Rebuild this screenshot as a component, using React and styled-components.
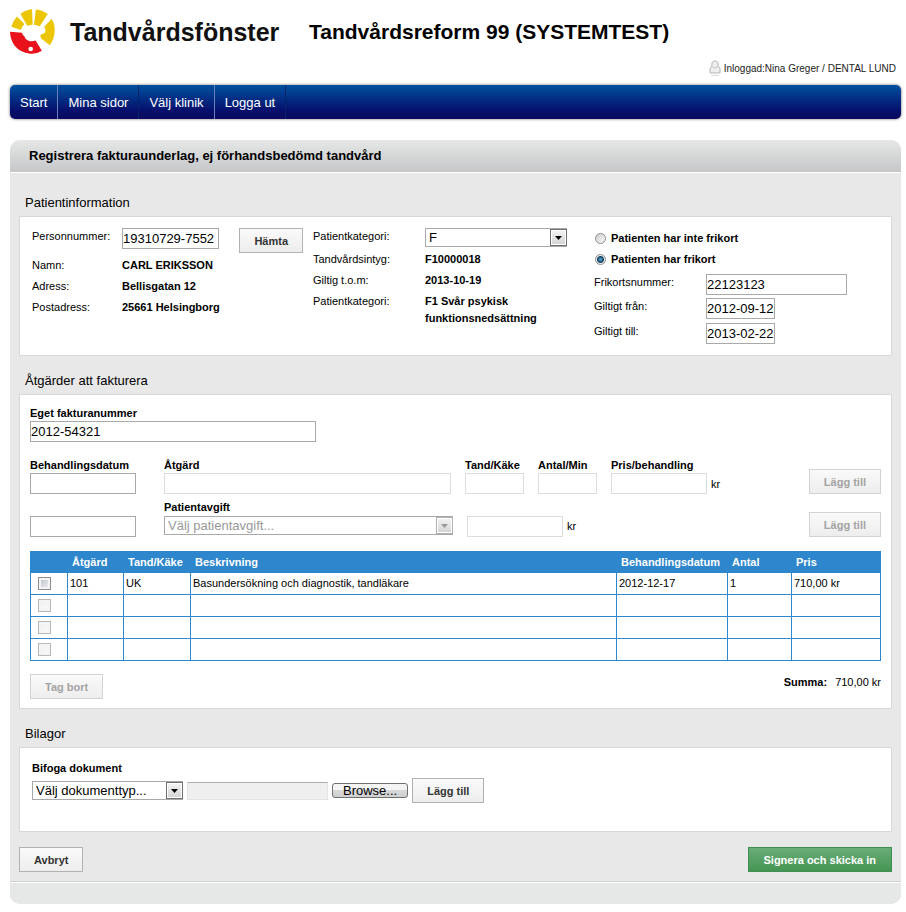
import React, { useRef, useState } from 'react';
import styled, { createGlobalStyle, css } from 'styled-components';

const GlobalStyle = createGlobalStyle`
  * {
    box-sizing: border-box;
  }

  body {
    margin: 0;
    background: #fff;
    color: #000;
    font-family: 'Liberation Sans', Arial, sans-serif;
    font-size: 11px;
    line-height: 17px;
  }

  input, select, button {
    margin: 0;
    font-family: inherit;
  }
`;

const Page = styled.div`
  padding: 0 5px 8px 10px;
`;

/* ---------- header ---------- */

const Header = styled.header`
  display: flex;
  align-items: center;
  height: 60px;
  padding-top: 3px;
`;

const Brand = styled.span`
  width: 239px;
  margin-left: 15px;
  font-size: 25px;
  line-height: 32px;
  font-weight: bold;
  color: #111;
`;

const SystemName = styled.h1`
  margin: 0;
  font-size: 21px;
  line-height: 32px;
  font-weight: bold;
`;

const UserInfo = styled.div`
  display: flex;
  justify-content: flex-end;
  align-items: center;
  gap: 3px;
  height: 17px;
  margin-bottom: 8px;
  padding-right: 5px;
  font-size: 10px;
  color: #222;
`;

const Nav = styled.nav`
  display: flex;
  height: 34px;
  border-radius: 5px;
  background: linear-gradient(#00509f, #06106c 75%, #0a0a5c);
  box-shadow: 0 0 3px rgba(0, 0, 0, 0.6);
`;

const NavLink = styled.a`
  padding: 0 10px;
  border-right: 1px solid ${(props) => (props.$strong ? '#6a7fb5' : '#06246b')};
  font-size: 13px;
  line-height: 35px;
  color: #fff;
  text-decoration: none;
`;

/* ---------- panel ---------- */

const Panel = styled.main`
  margin-top: 21px;
  border-radius: 10px;
  overflow: hidden;
  background: #e8e8e8;
`;

const PanelTitle = styled.h2`
  margin: 0;
  padding: 0 19px;
  border-bottom: 1px solid #fff;
  background: linear-gradient(#e6e8e7, #c5c6c8);
  font-size: 13px;
  line-height: 32px;
  font-weight: bold;
`;

const PanelBody = styled.div`
  padding: 20px 9px 9px;
`;

const PanelFooter = styled.footer`
  height: 23px;
  border-top: 1px solid #d0d0d0;
  background: #e5e8e7;
  box-shadow: inset 0 1px 0 #fff;
`;

const SectionTitle = styled.h3`
  margin: 0 0 3px;
  padding-left: 6px;
  font-size: 13px;
  line-height: 20px;
  font-weight: normal;
`;

const Box = styled.section`
  margin-bottom: 15px;
  border: 1px solid #d8d8d8;
  background: #fff;
`;

const PatientBox = styled(Box)`
  display: grid;
  grid-template-columns: repeat(3, 1fr);
  min-height: 140px;
  padding: 11px 16px 11px 12px;
`;

const TreatmentBox = styled(Box)`
  padding: 10px 10px 9px;
`;

const AttachmentBox = styled(Box)`
  min-height: 85px;
  padding: 12px;
`;

/* ---------- controls ---------- */

const TextInput = styled.input`
  width: ${(props) => props.$width};
  height: 21px;
  padding: 0;
  border: 1px solid #a9a9a9;
  border-radius: 0;
  background: #fff;
  color: #000;
  font-size: 13px;

  &:disabled {
    border-color: #ddd;
  }
`;

const buttonColors = {
  normal: css`
    border-color: #b2b2b2;
    background: linear-gradient(#fafafa, #ededed);
    color: #333;
  `,
  green: css`
    padding: 0 15px;
    border-color: #3f8f55;
    background: linear-gradient(#69ad78, #459453);
    color: #fff;
  `,
};

const Button = styled.button`
  height: 25px;
  padding: 0 14px;
  border: 1px solid;
  font-size: 11px;
  font-weight: bold;
  white-space: nowrap;
  ${(props) => buttonColors[props.$color || 'normal']}

  &:disabled {
    border-color: #d3d3d3;
    color: #a3a3a3;
  }
`;

const BrowseButton = styled.button`
  height: 15px;
  padding: 0 10px;
  border: 1px solid #707070;
  border-radius: 3px;
  background: linear-gradient(#f4f4f4 45%, #d8d8d8 50%, #d0d0d0);
  font-size: 13px;
  line-height: 13px;
`;

const FileName = styled.input`
  width: 141px;
  height: 18px;
  border: 1px solid #e3e3e3;
  border-top-color: #ababab;
  background: #efefef;
  font-size: 11px;
`;

const SelectWrap = styled.span`
  display: inline-block;
  position: relative;
  width: ${(props) => props.$width};
  height: 19px;
`;

const NativeSelect = styled.select`
  appearance: none;
  display: block;
  width: 100%;
  height: 100%;
  padding: 0 18px 0 3px;
  border: 1px solid #a9a9a9;
  border-radius: 0;
  background: #fff;
  color: #000;
  font-size: 13px;

  &:disabled {
    opacity: 1;
    color: #999;
  }
`;

const Arrow = styled.span`
  position: absolute;
  top: 1px;
  right: 0;
  bottom: 1px;
  display: flex;
  align-items: center;
  justify-content: center;
  width: 17px;
  border: 1px solid ${(props) => (props.$disabled ? '#b0b0b0' : '#6f6f6f')};
  background: linear-gradient(#f4f4f4, #d3d3d3);
  box-shadow: inset 0 0 0 1px #fff;
  color: ${(props) => (props.$disabled ? '#999' : '#000')};
  pointer-events: none;
`;

const Radio = styled.input`
  appearance: none;
  width: 11px;
  height: 11px;
  border: 1px solid #8e8f8f;
  border-radius: 50%;
  background: linear-gradient(135deg, #cfcfcf, #f8f8f8);

  &:checked {
    background: radial-gradient(circle, #56b0dc 0, #16405f 3px, #eee 4px);
  }
`;

const Checkbox = styled.input`
  appearance: none;
  display: block;
  width: 13px;
  height: 13px;
  margin-left: 7px;
  border: 1px solid #8e8f8f;
  background: linear-gradient(135deg, #b4bac6, #f6f6f6);
  box-shadow: inset 0 0 0 2px #f4f4f4;

  &:checked {
    background: #2f5f8f;
  }

  &:disabled {
    border-color: #b8b8b8;
    background: linear-gradient(135deg, #eee, #fafafa);
  }
`;

/* ---------- patient information ---------- */

const InfoRow = styled.div`
  display: grid;
  grid-template-columns: ${(props) => props.$label || '112px'} 1fr;
  align-items: start;
  min-height: ${(props) => props.$height || '21px'};
`;

const InfoLabel = styled.label`
  line-height: 17px;
`;

const InfoValue = styled.strong`
  padding: 2px 0;
`;

const InfoTerm = styled.span`
  padding: 2px 0;
`;

const WithButton = styled.div`
  display: flex;
  justify-content: space-between;
  padding-right: 10px;
`;

const RadioRow = styled.label`
  display: flex;
  align-items: center;
  gap: 5px;
  height: 21px;
  padding-left: 1px;
  font-weight: bold;
`;

const CardFields = styled.div`
  padding-top: 4px;
`;

/* ---------- treatments ---------- */

const Field = styled.div`
  display: flex;
  flex-direction: column;
  align-items: flex-start;
  line-height: 16px;
  font-weight: bold;

  & > ${SelectWrap} {
    margin: 1px 0 2px;
  }
`;

const EntryRow = styled.div`
  display: flex;
  align-items: flex-end;
  gap: 14px;
  margin-top: ${(props) => props.$top};

  & > :first-child {
    margin-right: 14px;
  }

  & > :last-child {
    margin-left: auto;
  }
`;

const Price = styled.div`
  display: flex;
  align-items: center;
  gap: 4px;
  font-weight: normal;
`;

const Table = styled.table`
  width: 100%;
  margin-top: 14px;
  border-collapse: collapse;
  table-layout: fixed;
`;

const HeadCell = styled.th`
  width: ${(props) => props.$width || 'auto'};
  height: 21px;
  padding: 0 0 0 4px;
  border: 1px solid #2e86cc;
  background: #2e86cc;
  color: #fff;
  text-align: left;
  white-space: nowrap;
`;

const Cell = styled.td`
  height: 22px;
  padding: 0 0 0 2px;
  border: 1px solid #2e86cc;

  &:first-child {
    padding-left: 0;
  }
`;

const TableFooter = styled.div`
  display: flex;
  justify-content: space-between;
  margin-top: 13px;
`;

const Sum = styled.div`
  display: flex;
  gap: 8px;
`;

/* ---------- attachments and actions ---------- */

const AttachRow = styled.div`
  display: flex;
  align-items: center;
  gap: 4px;
  margin-top: 2px;
`;

const HiddenFile = styled.input`
  display: none;
`;

const Actions = styled.div`
  display: flex;
  justify-content: space-between;
`;

const Logo = () => (
  <svg width="45" height="45" viewBox="30 23 137 137" aria-hidden="true">
    <g fill="#ecc505">
      <path d="M34 77 Q39 59 51 46 L74 69 Q66 77 63 87 Z" />
      <path d="M62 38 Q77 26 97 24 L99 71 Q90 71 83 75 Z" />
      <path d="M109 24 Q128 26 145 38 L120 76 Q112 71 103 71 Z" />
      <path d="M157 53 Q167 70 166 91 Q165 115 151 133 L125 113 Q120 105 125 100 Q137 98 138 91 Q138 83 134 77 Z" />
    </g>
    <path
      fill="#e8111c"
      d="M30 92 L67 95 Q67 102 74 106 Q77 119 91 121 Q100 122 108 119 L127 150 Q111 161 91 159 Q62 157 45 136 Q31 117 30 92 Z"
    />
    <circle cx="93" cy="145" r="7" fill="#fff" />
  </svg>
);

const UserIcon = () => (
  <svg width="12" height="17" viewBox="0 0 12 17" aria-hidden="true">
    <path d="M1 13 V9 Q1 7 3 6.5 Q2 1 6 1 Q10 1 9 6.5 Q11 7 11 9 V13 Z" fill="#eee" stroke="#b5b5b5" />
    <path d="M3.5 7 Q6 9 8.5 7" fill="none" stroke="#c4c4c4" />
    <path d="M2 15.5 H10" stroke="#ddd" />
  </svg>
);

const Select = ({ width, disabled, children, ...rest }) => (
  <SelectWrap $width={width}>
    <NativeSelect disabled={disabled} {...rest}>
      {children}
    </NativeSelect>
    <Arrow $disabled={disabled}>
      <svg width="7" height="4" viewBox="0 0 7 4" aria-hidden="true">
        <path d="M0 0 H7 L3.5 4 Z" fill="currentColor" />
      </svg>
    </Arrow>
  </SelectWrap>
);

const rows = [
  { code: '101', tooth: 'UK', text: 'Basundersökning och diagnostik, tandläkare', date: '2012-12-17', count: '1', price: '710,00 kr' },
  {},
  {},
  {},
];

const PatientInformation = () => {
  const [hasCard, setHasCard] = useState(true);

  return (
    <PatientBox>
      <div>
        <InfoRow $label="90px" $height="27px">
          <InfoLabel htmlFor="personnummer">Personnummer:</InfoLabel>
          <WithButton>
            <TextInput id="personnummer" $width="97px" defaultValue="19310729-7552" />
            <Button type="button">Hämta</Button>
          </WithButton>
        </InfoRow>
        <InfoRow $label="90px">
          <InfoTerm>Namn:</InfoTerm>
          <InfoValue>CARL ERIKSSON</InfoValue>
        </InfoRow>
        <InfoRow $label="90px">
          <InfoTerm>Adress:</InfoTerm>
          <InfoValue>Bellisgatan 12</InfoValue>
        </InfoRow>
        <InfoRow $label="90px">
          <InfoTerm>Postadress:</InfoTerm>
          <InfoValue>25661 Helsingborg</InfoValue>
        </InfoRow>
      </div>

      <div>
        <InfoRow>
          <InfoLabel htmlFor="patientkategori">Patientkategori:</InfoLabel>
          <Select id="patientkategori" width="142px" defaultValue="F">
            <option>F</option>
          </Select>
        </InfoRow>
        <InfoRow>
          <InfoTerm>Tandvårdsintyg:</InfoTerm>
          <InfoValue>F10000018</InfoValue>
        </InfoRow>
        <InfoRow>
          <InfoTerm>Giltig t.o.m:</InfoTerm>
          <InfoValue>2013-10-19</InfoValue>
        </InfoRow>
        <InfoRow>
          <InfoTerm>Patientkategori:</InfoTerm>
          <InfoValue>F1 Svår psykisk funktionsnedsättning</InfoValue>
        </InfoRow>
      </div>

      <div>
        <RadioRow>
          <Radio type="radio" name="frikort" checked={!hasCard} onChange={() => setHasCard(false)} />
          Patienten har inte frikort
        </RadioRow>
        <RadioRow>
          <Radio type="radio" name="frikort" checked={hasCard} onChange={() => setHasCard(true)} />
          Patienten har frikort
        </RadioRow>
        <CardFields>
          <InfoRow $height="24px">
            <InfoLabel htmlFor="frikortsnummer">Frikortsnummer:</InfoLabel>
            <TextInput id="frikortsnummer" $width="141px" defaultValue="22123123" />
          </InfoRow>
          <InfoRow $height="25px">
            <InfoLabel htmlFor="giltigtFran">Giltigt från:</InfoLabel>
            <TextInput id="giltigtFran" $width="69px" defaultValue="2012-09-12" />
          </InfoRow>
          <InfoRow>
            <InfoLabel htmlFor="giltigtTill">Giltigt till:</InfoLabel>
            <TextInput id="giltigtTill" $width="69px" defaultValue="2013-02-22" />
          </InfoRow>
        </CardFields>
      </div>
    </PatientBox>
  );
};

const Treatments = () => (
  <TreatmentBox>
    <Field>
      <label htmlFor="fakturanummer">Eget fakturanummer</label>
      <TextInput id="fakturanummer" $width="286px" defaultValue="2012-54321" />
    </Field>

    <EntryRow $top="15px">
      <Field>
        <label htmlFor="behandlingsdatum">Behandlingsdatum</label>
        <TextInput id="behandlingsdatum" $width="106px" />
      </Field>
      <Field>
        <label htmlFor="atgard">Åtgärd</label>
        <TextInput id="atgard" $width="287px" disabled />
      </Field>
      <Field>
        <label htmlFor="tand">Tand/Käke</label>
        <TextInput id="tand" $width="59px" disabled />
      </Field>
      <Field>
        <label htmlFor="antal">Antal/Min</label>
        <TextInput id="antal" $width="59px" disabled />
      </Field>
      <Field>
        <label htmlFor="pris">Pris/behandling</label>
        <Price>
          <TextInput id="pris" $width="96px" disabled />
          kr
        </Price>
      </Field>
      <Button type="button" disabled>Lägg till</Button>
    </EntryRow>

    <EntryRow $top="5px">
      <TextInput $width="106px" aria-label="Datum" />
      <Field>
        <label htmlFor="patientavgift">Patientavgift</label>
        <Select id="patientavgift" width="289px" disabled>
          <option>Välj patientavgift...</option>
        </Select>
      </Field>
      <Price>
        <TextInput $width="96px" aria-label="Avgift" disabled />
        kr
      </Price>
      <Button type="button" disabled>Lägg till</Button>
    </EntryRow>

    <Table>
      <thead>
        <tr>
          <HeadCell $width="37px" aria-label="Välj" />
          <HeadCell $width="56px">Åtgärd</HeadCell>
          <HeadCell $width="67px">Tand/Käke</HeadCell>
          <HeadCell>Beskrivning</HeadCell>
          <HeadCell $width="111px">Behandlingsdatum</HeadCell>
          <HeadCell $width="64px">Antal</HeadCell>
          <HeadCell $width="89px">Pris</HeadCell>
        </tr>
      </thead>
      <tbody>
        {rows.map((row, i) => (
          <tr key={i}>
            <Cell>
              <Checkbox type="checkbox" disabled={!row.code} aria-label={`Rad ${i + 1}`} />
            </Cell>
            <Cell>{row.code}</Cell>
            <Cell>{row.tooth}</Cell>
            <Cell>{row.text}</Cell>
            <Cell>{row.date}</Cell>
            <Cell>{row.count}</Cell>
            <Cell>{row.price}</Cell>
          </tr>
        ))}
      </tbody>
    </Table>

    <TableFooter>
      <Button type="button" disabled>Tag bort</Button>
      <Sum>
        <strong>Summa:</strong>
        <span>710,00 kr</span>
      </Sum>
    </TableFooter>
  </TreatmentBox>
);

const Attachments = () => {
  const fileRef = useRef(null);
  const [fileName, setFileName] = useState('');

  const handleFile = (e) => {
    setFileName(e.target.files[0] ? e.target.files[0].name : '');
  };

  return (
    <AttachmentBox>
      <Field as="label" htmlFor="dokumenttyp">Bifoga dokument</Field>
      <AttachRow>
        <Select id="dokumenttyp" width="151px">
          <option>Välj dokumenttyp...</option>
        </Select>
        <FileName type="text" aria-label="Vald fil" value={fileName} readOnly />
        <HiddenFile type="file" ref={fileRef} onChange={handleFile} />
        <BrowseButton type="button" onClick={() => fileRef.current.click()}>Browse...</BrowseButton>
        <Button type="button">Lägg till</Button>
      </AttachRow>
    </AttachmentBox>
  );
};

const App = () => (
  <>
    <GlobalStyle />
    <Page>
      <Header>
        <Logo />
        <Brand>Tandvårdsfönster</Brand>
        <SystemName>Tandvårdsreform 99 (SYSTEMTEST)</SystemName>
      </Header>
      <UserInfo>
        <UserIcon />
        Inloggad:Nina Greger / DENTAL LUND
      </UserInfo>
      <Nav>
        <NavLink href="#start" $strong>Start</NavLink>
        <NavLink href="#mina-sidor">Mina sidor</NavLink>
        <NavLink href="#valj-klinik" $strong>Välj klinik</NavLink>
        <NavLink href="#logga-ut">Logga ut</NavLink>
      </Nav>

      <Panel>
        <PanelTitle>Registrera fakturaunderlag, ej förhandsbedömd tandvård</PanelTitle>
        <PanelBody>
          <SectionTitle>Patientinformation</SectionTitle>
          <PatientInformation />
          <SectionTitle>Åtgärder att fakturera</SectionTitle>
          <Treatments />
          <SectionTitle>Bilagor</SectionTitle>
          <Attachments />
          <Actions>
            <Button type="button">Avbryt</Button>
            <Button type="submit" $color="green">Signera och skicka in</Button>
          </Actions>
        </PanelBody>
        <PanelFooter />
      </Panel>
    </Page>
  </>
);

export default App;
